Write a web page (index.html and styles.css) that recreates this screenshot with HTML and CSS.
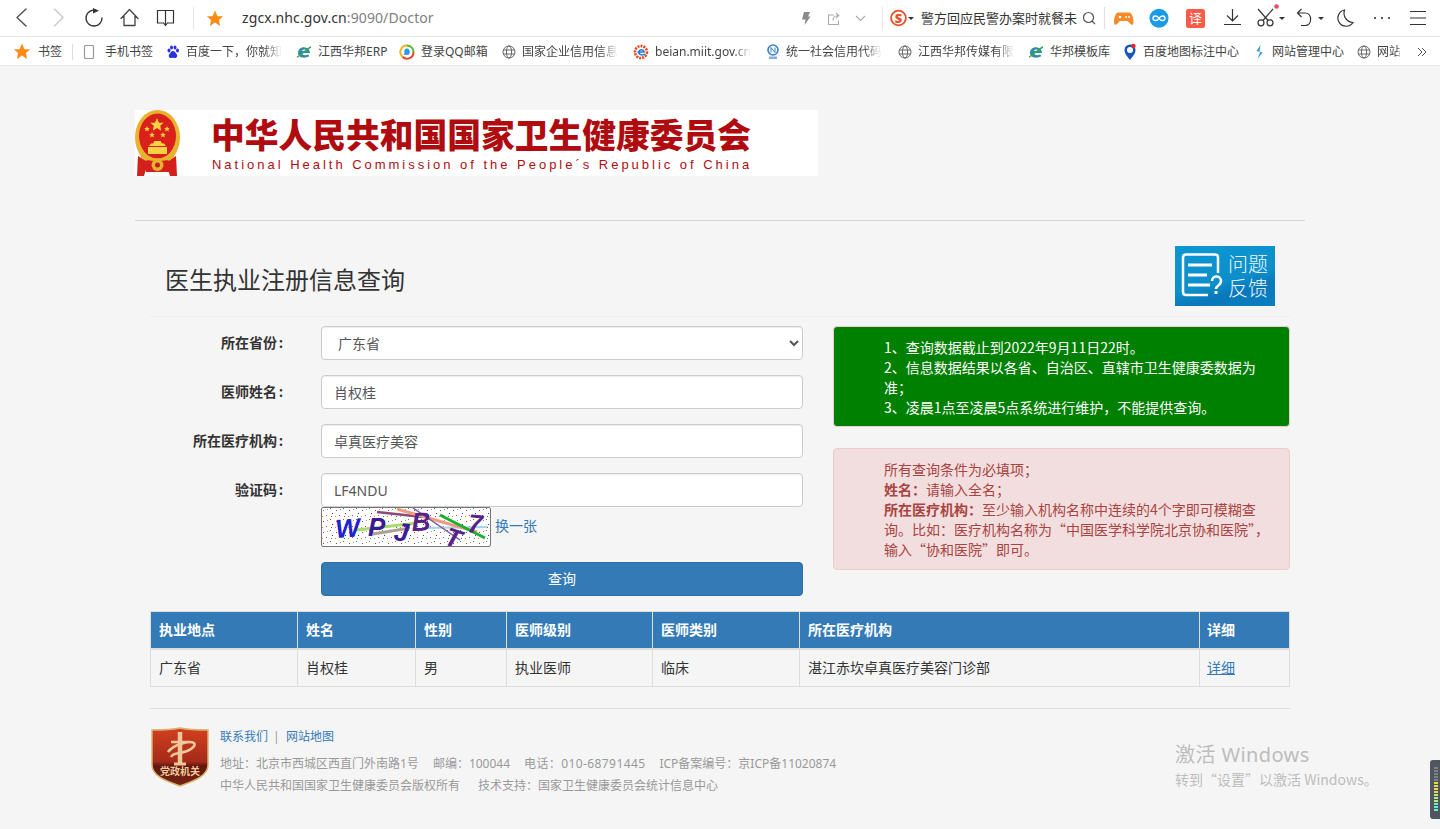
FILE: index.html
```html
<!DOCTYPE html>
<html lang="zh-CN">
<head>
<meta charset="utf-8">
<title>医生执业注册信息查询</title>
<link rel="stylesheet" href="styles.css">
</head>
<body>
<svg class="defs" width="0" height="0" aria-hidden="true">
  <defs>
    <polygon id="star" points="0,-10 2.9,-3.1 9.5,-3.1 4.7,1.2 5.9,8.1 0,4.2 -5.9,8.1 -4.7,1.2 -9.5,-3.1 -2.9,-3.1"/>
    <symbol id="globe" viewBox="0 0 14 14"><g fill="none" stroke="#666" stroke-width="1"><circle cx="7" cy="7" r="6"/><ellipse cx="7" cy="7" rx="2.6" ry="6"/><path d="M1.2 5H12.8M1.2 9H12.8"/></g></symbol>
    <symbol id="ie" viewBox="0 0 16 14"><path d="M2 8C2 3 7 1 11 3C13 4 14 6 14 8H6C6 10 9 11 12 9.5L13.5 11C9 14 2 13 2 8Z" fill="#2f8fa8"/><path d="M6 6H10.500C10 4 7 4 6 6Z" fill="#fff"/><path d="M1 12C4 11 12 3 15 2" fill="none" stroke="#3da24a" stroke-width="1.400"/></symbol>
    <pattern id="noise" width="13" height="11" patternUnits="userSpaceOnUse">
      <rect x="2" y="3" width="1" height="1" fill="#c33"/><rect x="9" y="1" width="1" height="1" fill="#393"/><rect x="11" y="6" width="1" height="1" fill="#33c"/><rect x="6" y="2" width="1" height="1" fill="#999"/><rect x="5" y="8" width="1" height="1" fill="#c3c"/><rect x="10" y="9" width="1" height="1" fill="#666"/><rect x="1" y="9" width="1" height="1" fill="#c90"/>
    </pattern>
  </defs>
</svg>

<header class="toolbar">
  <svg class="tb-left" width="240" height="36" viewBox="0 0 240 36">
    <g fill="none" stroke-linecap="round" stroke-linejoin="round">
      <path d="M26 9L17 17.500L26 26" stroke="#555" stroke-width="1.500"/>
      <path d="M54.500 9L63 17.500L54.500 26" stroke="#ccc" stroke-width="1.500"/>
      <path d="M92.500 10.200A8 8 0 1 0 102 18" stroke="#333" stroke-width="1.400"/>
      <path d="M121 18.500L129.500 9.500L138 18.500M124 16V25.500H135V16" stroke="#444" stroke-width="1.300"/>
      <path d="M165.500 10.500H157.500V23H163M168 23H173.500V10.500H165.500V25.500M163.500 23L165.500 25.500L167.500 23" stroke="#333" stroke-width="1.200"/>
      <path d="M193.500 7V29" stroke="#e6e6e6"/>
    </g>
    <polygon points="93,8 99,10.800 93,13.500" fill="#333"/>
    <use href="#star" transform="translate(215 19) scale(.85)" fill="#ff8a14"/>
  </svg>
  <div class="url"><span class="url-host">zgcx.nhc.gov.cn</span><span class="url-path">:9090/Doctor</span></div>
  <svg class="tb-mid" width="125" height="36" viewBox="795 0 125 36">
    <polygon points="804,12 810,12 808,16.500 810.500,16.500 804.500,25 805.500,19.500 802,19.500" fill="#8a8a8a"/>
    <g fill="none" stroke="#aaa" stroke-width="1.100">
      <path d="M834 15H828.500V24.500H838.500V20.500M833 20.500C833 17.500 835 15.500 838.500 15.500M836 13L838.800 15.500L836 18"/>
      <path d="M856 16L860.500 20.500L865 16"/>
      <path d="M882.500 7V29" stroke="#e6e6e6"/>
    </g>
    <circle cx="898.500" cy="18" r="7.400" fill="#fff" stroke="#ec4f24" stroke-width="1.800"/>
    <text x="898.500" y="22.500" class="sogou-s">S</text>
    <polygon points="908,17 914,17 911,20" fill="#333"/>
  </svg>
  <span class="news">警方回应民警办案时就餐未</span>
  <svg class="tb-right" width="363" height="36" viewBox="1077 0 363 36">
    <g fill="none" stroke="#555" stroke-width="1.200">
      <circle cx="1088.500" cy="17.500" r="5"/>
      <path d="M1092 21L1095 24.200"/>
      <path d="M1104.500 7V29" stroke="#e0e0e0"/>
    </g>
    <path d="M1118 12.500H1129.500C1132.500 12.500 1134.500 22 1133 24.500C1131 26 1128.500 21 1127 21H1120.500C1119 21 1116.500 26 1114.500 24.500C1113 22 1115 12.500 1118 12.500Z" fill="#f58a28"/>
    <circle cx="1120" cy="17" r="1.300" fill="#fff"/><circle cx="1126" cy="17" r="1" fill="#fff"/><circle cx="1129" cy="17" r="1" fill="#fff"/>
    <circle cx="1159" cy="18.300" r="9.500" fill="#1a9be8"/>
    <path d="M1159 18.300C1157 15 1153 15.500 1153 18.300C1153 21 1157 21.500 1159 18.300C1161 15 1165 15.500 1165 18.300C1165 21 1161 21.500 1159 18.300Z" fill="none" stroke="#fff" stroke-width="1.300"/>
    <rect x="1186" y="9" width="19" height="19" rx="2.500" fill="#fa5a48"/>
    <text x="1195.500" y="23" class="yi">译</text>
    <g fill="none" stroke="#333" stroke-width="1.200">
      <path d="M1232.500 9V21M1227 15.500L1232.500 21L1238 15.500M1224 24.500H1241"/>
      <circle cx="1261" cy="22.800" r="3"/><circle cx="1270" cy="22.800" r="3"/>
      <path d="M1263 20.500L1273 9M1268 20.500L1258 9"/>
      <path d="M1297.500 13H1305C1312.500 13 1312.500 25.500 1305 25.500H1301M1301.500 9L1297.500 13L1301.500 17"/>
      <path d="M1344.500 10A8.200 8.200 0 1 0 1353 22.500A9.500 9.500 0 0 1 1344.500 10Z"/>
      <path d="M1410 11.500H1426M1410 18H1426M1410 24.500H1426"/>
    </g>
    <circle cx="1276.500" cy="6.500" r="2.300" fill="#ef4b5c"/>
    <polygon points="1279,17 1285,17 1282,20" fill="#333"/>
    <polygon points="1318,17 1324,17 1321,20" fill="#333"/>
    <circle cx="1375" cy="18" r="1.100" fill="#333"/><circle cx="1382" cy="18" r="1.100" fill="#333"/><circle cx="1389" cy="18" r="1.100" fill="#333"/>
  </svg>
</header>

<nav class="bookmarks">
  <span class="bm bm-star">
    <svg width="18" height="18" viewBox="-9 -9 18 18"><use href="#star" transform="scale(.85)" fill="#ff8a14"/></svg>
    <span class="bm-text">书签</span>
  </span>
  <i class="bm-sep"></i>
  <span class="bm bm-phone">
    <svg width="14" height="14" viewBox="0 0 14 14"><rect x="2.500" y="0.500" width="9" height="13" rx="1" fill="none" stroke="#999" stroke-width="1.200"/></svg>
    <span class="bm-text">手机书签</span>
  </span>
  <span class="bm">
    <svg width="14" height="14" viewBox="0 0 14 14" fill="#2932e1"><ellipse cx="3" cy="5.500" rx="1.500" ry="2"/><ellipse cx="5.500" cy="2.500" rx="1.500" ry="2"/><ellipse cx="9" cy="2.500" rx="1.500" ry="2"/><ellipse cx="11.500" cy="5.500" rx="1.500" ry="2"/><path d="M7 6C5 6 4.500 8 3.500 9C2 10.500 3 13.500 5.500 13C6.500 12.800 7.500 12.800 8.500 13C11 13.500 12 10.500 10.500 9C9.500 8 9 6 7 6Z"/></svg>
    <span class="bm-text bm-clip">百度一下，你就知道</span>
  </span>
  <span class="bm">
    <svg width="16" height="14"><use href="#ie"/></svg>
    <span class="bm-text">江西华邦ERP</span>
  </span>
  <span class="bm">
    <svg width="16" height="16" viewBox="0 0 16 16"><path d="M8 1.500A6.500 6.500 0 0 1 14.500 8" fill="none" stroke="#5cb531" stroke-width="2"/><path d="M14.500 8A6.500 6.500 0 0 1 3.500 12.800" fill="none" stroke="#e8402a" stroke-width="2"/><path d="M3.500 12.800A6.500 6.500 0 0 1 8 1.500" fill="none" stroke="#f3b41b" stroke-width="2"/><path d="M8 4.500C5.500 4.500 5 7 5.500 8.500L4.500 11C6 10.500 7 11 8 11C10.500 11 11 9 10.700 7.500C10.500 5.500 9.500 4.500 8 4.500Z" fill="#2a9be0"/></svg>
    <span class="bm-text">登录QQ邮箱</span>
  </span>
  <span class="bm">
    <svg width="14" height="14"><use href="#globe"/></svg>
    <span class="bm-text bm-clip">国家企业信用信息公示</span>
  </span>
  <span class="bm">
    <svg width="16" height="16" viewBox="0 0 16 16"><circle cx="8" cy="8" r="6" fill="none" stroke="#e8461e" stroke-width="2.600" stroke-dasharray="2 1"/><path d="M4.500 8H11C11 5.500 7 5 6 7.500C5 10.500 9 12 12 10" fill="none" stroke="#1d78c9" stroke-width="1.500"/></svg>
    <span class="bm-text bm-clip">beian.miit.gov.cn/</span>
  </span>
  <span class="bm">
    <svg width="14" height="16" viewBox="0 0 14 16"><circle cx="7" cy="6" r="5" fill="none" stroke="#3b7fc4" stroke-width="1.600"/><path d="M5 8.500V3.500L9 8.500V3.500" fill="none" stroke="#3b7fc4"/><rect x="3" y="12.500" width="8" height="2.500" fill="#7fb0de"/></svg>
    <span class="bm-text bm-clip">统一社会信用代码查询</span>
  </span>
  <span class="bm">
    <svg width="14" height="14"><use href="#globe"/></svg>
    <span class="bm-text bm-clip">江西华邦传媒有限公司</span>
  </span>
  <span class="bm">
    <svg width="16" height="14"><use href="#ie"/></svg>
    <span class="bm-text">华邦模板库</span>
  </span>
  <span class="bm">
    <svg width="14" height="18" viewBox="0 0 14 18"><path d="M7 17C3 12 1.500 10 1.500 7A5.500 5.500 0 0 1 7 1.500C10 1.500 12.500 4 12.500 7C12.500 10 11 12 7 17Z" fill="#1957b8"/><circle cx="7" cy="7" r="3" fill="#fff"/><circle cx="10.500" cy="3" r="2.200" fill="#e8262c"/></svg>
    <span class="bm-text">百度地图标注中心</span>
  </span>
  <span class="bm">
    <svg width="14" height="16" viewBox="0 0 14 16"><path d="M8.500 1L4.500 7L8 8L5.500 15L10.500 8.500L7.500 7.500Z" fill="#3a9be0"/></svg>
    <span class="bm-text">网站管理中心</span>
  </span>
  <span class="bm">
    <svg width="14" height="14"><use href="#globe"/></svg>
    <span class="bm-text bm-clip bm-short">网站管理</span>
  </span>
  <svg class="bm-more" width="10" height="10" viewBox="0 0 10 10"><path d="M1 1L5 5L1 9M5 1L9 5L5 9" fill="none" stroke="#555"/></svg>
</nav>

<main class="page">
  <div class="banner">
    <svg class="emblem" width="46" height="66" viewBox="0 0 46 66">
      <path d="M3 46L13 52L9 66H2ZM41 46L31 52L35 66H42Z" fill="#d3201c"/>
      <ellipse cx="22.500" cy="27.500" rx="22.500" ry="27.500" fill="#e9b22e"/>
      <ellipse cx="22.500" cy="26" rx="18.500" ry="22.500" fill="#d9201a"/>
      <g fill="#f7d244">
        <use href="#star" transform="translate(22 15) scale(.7)"/>
        <use href="#star" transform="translate(12 19) scale(.3)"/>
        <use href="#star" transform="translate(32 19) scale(.3)"/>
        <use href="#star" transform="translate(17 25) scale(.3)"/>
        <use href="#star" transform="translate(28 25) scale(.3)"/>
        <path d="M14 36H31L29 33.500H27L25.500 31H19.500L18 33.500H16ZM13 37H32V44H13Z"/>
      </g>
      <path d="M8 52C14 48 31 48 37 52L34 62H11Z" fill="#d3201c"/>
      <circle cx="22.500" cy="55" r="6" fill="#e9b22e"/>
      <circle cx="22.500" cy="55" r="2.500" fill="#b5271c"/>
      <path d="M6 46C12 51 33 51 39 46" fill="none" stroke="#e9b22e" stroke-width="2.500"/>
    </svg>
    <div class="banner-text">
      <div class="banner-cn">中华人民共和国国家卫生健康委员会</div>
      <div class="banner-en">National Health Commission of the People´s Republic of China</div>
    </div>
  </div>
  <hr class="rule">

  <section class="content">
    <div class="title-row">
      <h1 class="title">医生执业注册信息查询</h1>
      <div class="feedback">
        <svg width="53" height="60" viewBox="0 0 53 60">
          <g fill="none" stroke="#fff">
            <path d="M43 27V11.500Q43 8.500 40 8.500H11Q8 8.500 8 11.500V46Q8 49 11 49H33" stroke-width="2.500"/>
            <path d="M13 19H37M13 29H32M13 39H35" stroke-width="3"/>
            <path d="M37 35C37 29 46 29 46 35C46 40 41 39 41 43" stroke-width="2.500"/>
          </g>
          <rect x="39.500" y="45" width="3" height="3" fill="#fff"/>
        </svg>
        <div class="feedback-text">问题<br>反馈</div>
      </div>
    </div>

    <div class="query">
      <form class="form">
        <div class="form-row">
          <label class="form-label">所在省份<i class="colon">:</i></label>
          <select class="control control-select"><option>广东省</option></select>
        </div>
        <div class="form-row">
          <label class="form-label">医师姓名<i class="colon">:</i></label>
          <input class="control" type="text" value="肖权桂">
        </div>
        <div class="form-row">
          <label class="form-label">所在医疗机构<i class="colon">:</i></label>
          <input class="control" type="text" value="卓真医疗美容">
        </div>
        <div class="form-row">
          <label class="form-label">验证码<i class="colon">:</i></label>
          <div class="control-wrap">
            <input class="control" type="text" value="LF4NDU">
            <div class="captcha-row">
              <svg class="captcha" width="170" height="40" viewBox="0 0 170 40">
                <rect width="170" height="40" fill="#fff"/>
                <rect width="170" height="40" fill="url(#noise)"/>
                <g fill="none">
                  <path d="M36 23L96 16" stroke="#a8dc6a" stroke-width="3"/>
                  <path d="M52 27L89 21" stroke="#b0a090" stroke-width="3"/>
                  <path d="M102 21L166 20" stroke="#a8d4e8" stroke-width="2"/>
                  <path d="M56 5L102 10" stroke="#8a4a7a" stroke-width="2.500"/>
                  <path d="M76 2L156 25" stroke="#f09a80" stroke-width="3"/>
                  <path d="M92 1L139 33" stroke="#7a5a9a" stroke-width="1.500"/>
                  <path d="M119 8L164 31" stroke="#18b030" stroke-width="3"/>
                </g>
                <text class="cap cap-w" transform="translate(15 31) rotate(-4)">W</text>
                <text class="cap cap-p" transform="translate(47 29)">P</text>
                <text class="cap cap-p" transform="translate(72 33) rotate(8)">J</text>
                <text class="cap cap-b" transform="translate(91 24) rotate(-2)">B</text>
                <text class="cap cap-b" transform="translate(122 37) rotate(18)">T</text>
                <text class="cap cap-b" transform="translate(146 25) rotate(6)">7</text>
              </svg>
              <a class="link refresh" href="#">换一张</a>
            </div>
          </div>
        </div>
        <div class="form-row">
          <span class="form-label"></span>
          <button class="submit" type="button">查询</button>
        </div>
      </form>

      <aside class="notes">
        <div class="note note-green">1、查询数据截止到2022年9月11日22时。<br>2、信息数据结果以各省、自治区、直辖市卫生健康委数据为准；<br>3、凌晨1点至凌晨5点系统进行维护，不能提供查询。</div>
        <div class="note note-pink">所有查询条件为必填项；<br><b>姓名：</b>请输入全名；<br><b>所在医疗机构：</b>至少输入机构名称中连续的4个字即可模糊查询。比如：医疗机构名称为“中国医学科学院北京协和医院”，输入“协和医院”即可。</div>
      </aside>
    </div>

    <table class="results">
      <thead>
        <tr>
          <th class="c1">执业地点</th><th class="c2">姓名</th><th class="c3">性别</th><th class="c4">医师级别</th><th class="c5">医师类别</th><th class="c6">所在医疗机构</th><th class="c7">详细</th>
        </tr>
      </thead>
      <tbody>
        <tr>
          <td>广东省</td><td>肖权桂</td><td>男</td><td>执业医师</td><td>临床</td><td>湛江赤坎卓真医疗美容门诊部</td><td class="c7"><a class="link link-u" href="#">详细</a></td>
        </tr>
      </tbody>
    </table>

    <footer class="footer">
      <svg class="badge" width="58" height="60" viewBox="0 0 58 60">
        <defs>
          <linearGradient id="badgeFill" x1="0" y1="0" x2="0" y2="1"><stop offset="0" stop-color="#d2401f"/><stop offset=".58" stop-color="#a52a18"/><stop offset=".66" stop-color="#5e170f"/><stop offset="1" stop-color="#7a2414"/></linearGradient>
        </defs>
        <path d="M29 1C38 3 48 3 57 3V38C57 50 40 55 29 59C18 55 1 50 1 38V3C10 3 20 3 29 1Z" fill="url(#badgeFill)" stroke="#d9b274" stroke-width="1.500"/>
        <g fill="none" stroke="#eec79b" stroke-width="2.600">
          <path d="M29 5V36" stroke-width="4.500"/>
          <path d="M20 15H38M17 25C22 18 38 13 43 16C46 19 38 25 28 26C24 26.500 21 28 20 30"/>
          <path d="M23 37H35" stroke-width="3"/>
        </g>
        <text x="29" y="48" class="badge-text">党政机关</text>
      </svg>
      <div class="footer-text">
        <div class="footer-links"><a class="link" href="#">联系我们</a><span class="pipe">|</span><a class="link" href="#">网站地图</a></div>
        <div class="footer-line"><span>地址：北京市西城区西直门外南路1号</span><span>邮编：100044</span><span class="num">电话：010-68791445</span><span>ICP备案编号：京ICP备11020874</span></div>
        <div class="footer-line footer-line-wide"><span>中华人民共和国国家卫生健康委员会版权所有</span><span>技术支持：国家卫生健康委员会统计信息中心</span></div>
      </div>
    </footer>
  </section>
</main>

<div class="watermark">
  <div class="wm-big">激活 Windows</div>
  <div class="wm-small">转到“设置”以激活 Windows。</div>
</div>
<div class="meter"><i class="m-off"></i><i class="m-off"></i><i class="m-off"></i><i class="m-off"></i><i class="m-off"></i><i class="m-y"></i><i class="m-y"></i><i class="m-y"></i><i class="m-y"></i><i class="m-g"></i><i class="m-g"></i><i class="m-g"></i><i class="m-c"></i><i class="m-c"></i><i class="m-c"></i></div>
</body>
</html>
```
FILE: styles.css
```css
* { box-sizing: border-box; }
html, body { margin: 0; padding: 0; height: 100%; overflow: hidden; }
body {
  position: relative;
  background: #f5f5f5;
  color: #333;
  font-family: "Noto Sans", "Noto Sans CJK SC", sans-serif;
  font-size: 14px;
  line-height: 20px;
}
.defs { position: absolute; }
svg { display: block; flex: none; }

.toolbar {
  display: flex;
  align-items: center;
  height: 37px;
  background: #fff;
  border-bottom: 1px solid #e3e3e3;
}
.tb-left { margin-right: 2px; }
.url { width: 553px; font-size: 14px; white-space: nowrap; letter-spacing: .1px; }
.url-host { color: #333; }
.url-path { color: #808080; }
.sogou-s { font: 900 13px "Noto Sans", sans-serif; fill: #ec4f24; text-anchor: middle; }
.news { width: 157px; flex: none; padding-left: 1px; font-size: 13px; color: #333; white-space: nowrap; overflow: hidden; }
.yi { font: 13px "Noto Sans CJK SC", sans-serif; fill: #fff; text-anchor: middle; }

.bookmarks {
  display: grid;
  grid-template-columns: 59px 10px 84px 130px 103px 103px 131px 133px 132px 130px 95px 129px 105px 60px 10px;
  align-items: center;
  height: 29px;
  padding: 1px 0 0 13px;
  background: #fff;
  border-bottom: 1px solid #e8e8e8;
  font-size: 12px;
  color: #444;
  white-space: nowrap;
  overflow: hidden;
}
.bm { display: flex; align-items: center; gap: 6px; }
.bm-star { gap: 7px; }
.bm-phone { gap: 9px; }
.bm-sep { width: 1px; height: 16px; background: #ddd; }
.bm-clip {
  display: block;
  width: 96px;
  overflow: hidden;
  -webkit-mask-image: linear-gradient(to right, #000 82%, transparent 100%);
  mask-image: linear-gradient(to right, #000 82%, transparent 100%);
}
.bm-short { width: 24px; }

.page { width: 1170px; margin: 0 auto; padding-top: 44px; }
.banner {
  display: flex;
  align-items: stretch;
  width: 683px;
  height: 66px;
  background: #fff;
}
.banner-text { margin-left: 31px; width: 545px; }
.banner-cn {
  margin-top: 5px;
  margin-left: -1px;
  font: 900 33.75px/38px "Noto Sans CJK SC", sans-serif;
  color: #b00c10;
  white-space: nowrap;
}
.banner-en {
  margin-top: 4px;
  font: 13px/16px "Liberation Sans", sans-serif;
  letter-spacing: 2.98px;
  color: #b00c10;
  white-space: nowrap;
}
.rule { height: 1px; margin: 44px 0 0; border: 0; background: #d5d5d5; }

.content { padding: 0 15px; }
.title-row {
  display: flex;
  justify-content: space-between;
  align-items: center;
  height: 96px;
  padding: 25px 15px 10px;
  border-bottom: 1px solid #eee;
  margin-bottom: 9px;
}
.title { margin: 0; font-size: 24px; line-height: 34px; font-weight: 400; color: #333; padding-top: 8px; }
.feedback {
  display: flex;
  align-items: center;
  width: 100px;
  height: 60px;
  background: linear-gradient(165deg, #0c97d2 0%, #0c8fcb 55%, #0a78ba 72%, #0a7fc0 100%);
}
.feedback-text { font-size: 20px; line-height: 24px; color: #eef8fd; font-family: "Noto Sans CJK SC", sans-serif; font-weight: 300; }

.query { display: flex; gap: 30px; }
.form { width: 653px; flex: none; }
.form-row { display: flex; gap: 38px; margin-bottom: 15px; }
.form-label { width: 133px; flex: none; padding-top: 7px; text-align: right; font-weight: 700; color: #333; }
.colon { margin-left: 2px; font-style: normal; }
.control {
  display: block;
  width: 482px;
  height: 34px;
  padding: 6px 12px;
  border: 1px solid #ccc;
  border-radius: 4px;
  background: #fff;
  color: #555;
  font: 14px/20px "Noto Sans", "Noto Sans CJK SC", sans-serif;
  box-shadow: inset 0 1px 1px rgba(0,0,0,.075);
}
.control-wrap { width: 482px; }
.captcha-row { display: flex; align-items: center; gap: 4px; }
.captcha { border-radius: 2px; outline: 1px solid #777; outline-offset: -1px; }
.cap { font: italic 700 26px "Liberation Sans", sans-serif; }
.cap-w { fill: #2222cc; }
.cap-p { fill: #3a1a9a; }
.cap-b { fill: #552288; }
.link { color: #337ab7; text-decoration: none; }
.link-u { text-decoration: underline; }
.refresh { margin-bottom: 2px; }
.submit {
  width: 482px;
  height: 34px;
  padding: 0 0 2px;
  border: 1px solid #2e6da4;
  border-radius: 4px;
  background: #337ab7;
  color: #fff;
  font: 14px "Noto Sans", "Noto Sans CJK SC", sans-serif;
}

.notes { width: 457px; flex: none; display: flex; flex-direction: column; gap: 21px; }
.note { padding: 10px 17px 9px 50px; border: 1px solid; border-radius: 4px; font-family: "Noto Sans CJK SC", sans-serif; }
.note-green { background: #008000; border-color: #ebccd1; color: #fff; }
.note-pink { padding-bottom: 10px; background: #f2dede; border-color: #ebccd1; color: #a94442; }

.results { width: 1139px; table-layout: fixed; border-collapse: separate; border-spacing: 0; border-top: 1px solid #ddd; border-left: 1px solid #ddd; }
.results th, .results td { padding: 8px; border-right: 1px solid #ddd; border-bottom: 1px solid #ddd; text-align: left; font-size: 14px; line-height: 20px; }
.results th { height: 37px; background: #337ab7; color: #fff; font-weight: 700; border-bottom-width: 2px; }
.results td { height: 37px; color: #333; }
.results .c7 { padding-left: 7px; }
.c1 { width: 147px; }
.c2 { width: 118px; }
.c3 { width: 91px; }
.c4 { width: 146px; }
.c5 { width: 147px; }
.c6 { width: 400px; }
.c7 { width: 90px; }

.footer {
  display: flex;
  gap: 11px;
  margin-top: 21px;
  padding-top: 19px;
  border-top: 1px solid #ddd;
  font-size: 12px;
}
.badge { margin: -1px 0 0 1px; }
.footer-links { display: flex; gap: 7px; line-height: 18px; }
.pipe { width: 3px; margin: 0 3px 0 -2px; color: #999; }
.footer-line { display: flex; gap: 14px; margin-top: 4px; line-height: 18px; color: #999; }
.footer-line-wide { gap: 18px; }
.footer-links + .footer-line { margin-top: 9px; }
.num { letter-spacing: .4px; }
.badge-text { font: 700 10px "Noto Sans CJK SC", sans-serif; fill: #f0c999; text-anchor: middle; }

.watermark { position: absolute; left: 1175px; top: 743px; color: #bdbdbd; white-space: nowrap; }
.wm-big { font-size: 20px; line-height: 24px; letter-spacing: .4px; }
.wm-small { font-size: 14px; line-height: 24px; font-family: "Noto Sans CJK SC", sans-serif; }
.meter {
  position: absolute;
  left: 1430px;
  top: 760px;
  width: 10px;
  height: 59px;
  padding: 7px 2px 0 4px;
  background: #50565f;
  border-radius: 3px 0 0 3px;
  display: flex;
  flex-direction: column;
  gap: 1px;
}
.meter i { display: block; height: 2px; flex: none; }
.m-off { background: #7c8187; }
.m-y { background: #e8d84a; }
.m-g { background: #b6e878; }
.m-c { background: #6fe8c8; }
```
